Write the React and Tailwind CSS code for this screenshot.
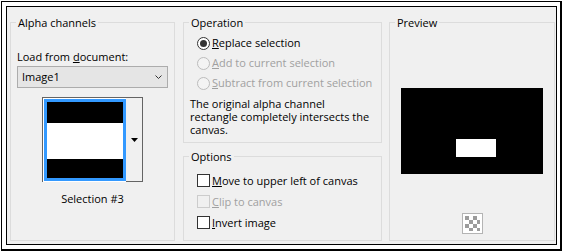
import React from 'react';

function Radio({ checked, disabled, children }) {
    return (
        <div className="flex items-center h-[20px]">
            <span className={disabled
                ? "w-[13px] h-[13px] rounded-full border border-[#bcbcbc] bg-[#f3f3f3] flex items-center justify-center"
                : "w-[13px] h-[13px] rounded-full border border-[#333333] bg-white flex items-center justify-center"}>
                {checked && <span className="w-[7px] h-[7px] rounded-full bg-[#333333]" />}
            </span>
            <span className={disabled ? "ml-[2px] text-[#a0a0a0]" : "ml-[2px] text-black"}>{children}</span>
        </div>
    );
}

function Check({ disabled, children }) {
    return (
        <div className="flex items-center h-[21px]">
            <span className={disabled
                ? "w-[13px] h-[13px] border border-[#cccccc] bg-[#f0f0f0]"
                : "w-[13px] h-[13px] border border-[#333333] bg-white"} />
            <span className={disabled ? "ml-[2px] text-[#a0a0a0]" : "ml-[2px] text-black"}>{children}</span>
        </div>
    );
}

export default function App() {
    return (
        <div className="w-[563px] h-[252px] bg-white pt-px pl-px font-['Open_Sans','Noto_Sans',sans-serif] text-[11px] leading-[16px] text-black">
            <div className="w-[561px] h-[250px] border-l border-t border-r-2 border-b-2 border-black pl-[4px] pt-[4px] pr-[3px] pb-[4px]">
                {/* dialog body */}
                <div className="w-[551px] h-[239px] border border-black bg-[#f0f0f0] flex pl-[3px] pt-[8px]">

                    {/* Alpha channels */}
                    <fieldset className="w-[165px] h-[226px] border border-[#dcdcdc] p-0 m-0">
                        <legend className="ml-[5px] px-[2px] leading-[15px]">Alpha channels</legend>
                        <div className="flex flex-col pl-[6px]">
                            <div className="mt-[19px]">Load from <u>d</u>ocument:</div>
                            <div className="mt-[1px] w-[151px] h-[22px] border border-[#acacac] bg-[#e5e5e5] flex items-center justify-between pl-[4px] pr-[5px]">
                                <span>Image1</span>
                                <svg width="7" height="4" viewBox="0 0 7 4">
                                    <polyline points="0.5,0.5 3.5,3.5 6.5,0.5" fill="none" stroke="#333" strokeWidth="1" />
                                </svg>
                            </div>
                        </div>
                        <div className="flex flex-col items-center">
                            <div className="mt-[9px] w-[101px] h-[85px] border-l border-t border-[#646464] flex">
                                <div className="w-[83px] h-full bg-white pl-px pt-px pb-px">
                                    <div className="w-[82px] h-[82px] border-[3px] border-[#3399ff] flex flex-col">
                                        <div className="h-[21px] bg-black" />
                                        <div className="h-[36px] bg-white" />
                                        <div className="flex-1 bg-black" />
                                    </div>
                                </div>
                                <div className="w-[17px] h-full bg-[#f0f0f0] border-r border-b border-[#646464] flex items-center justify-center">
                                    <svg width="7" height="4" viewBox="0 0 7 4">
                                        <polygon points="0,0 7,0 3.5,4" fill="#000" />
                                    </svg>
                                </div>
                            </div>
                            <div className="mt-[9px]">Selection #3</div>
                        </div>
                    </fieldset>

                    <div className="ml-[8px] w-[199px] flex flex-col">
                        {/* Operation */}
                        <fieldset className="w-full h-[128px] border border-[#dcdcdc] p-0 m-0">
                            <legend className="ml-[5px] px-[2px] leading-[15px]">Operation</legend>
                            <div className="mt-[3px] pl-[13px]">
                                <Radio checked><u>R</u>eplace selection</Radio>
                                <Radio disabled><u>A</u>dd to current selection</Radio>
                                <Radio disabled><u>S</u>ubtract from current selection</Radio>
                            </div>
                            <div className="mt-[4px] pl-[6px] leading-[13px]">
                                The original alpha channel<br />
                                rectangle completely intersects the<br />
                                canvas.
                            </div>
                        </fieldset>

                        {/* Options */}
                        <fieldset className="mt-[6px] w-full h-[92px] border border-[#dcdcdc] p-0 m-0">
                            <legend className="ml-[5px] px-[2px] leading-[15px]">Options</legend>
                            <div className="mt-[6px] pl-[13px]">
                                <Check><u>M</u>ove to upper left of canvas</Check>
                                <Check disabled><u>C</u>lip to canvas</Check>
                                <Check><u>I</u>nvert image</Check>
                            </div>
                        </fieldset>
                    </div>

                    {/* Preview */}
                    <fieldset className="ml-[7px] w-[166px] h-[226px] border border-[#dcdcdc] p-0 m-0">
                        <legend className="ml-[5px] px-[2px] leading-[15px]">Preview</legend>
                        <div className="flex flex-col items-center">
                            <div className="mt-[58px] w-[142px] h-[86px] bg-black pl-[55px] pt-[51px]">
                                <div className="w-[40px] h-[18px] bg-white" />
                            </div>
                            <svg className="mt-[39px]" width="21" height="21" viewBox="0 0 21 21">
                                <rect x="0.5" y="0.5" width="20" height="20" fill="#fff" stroke="#b4b4b4" />
                                <rect x="3" y="3" width="4" height="4" fill="#9c9c9c" />
                                <rect x="11" y="3" width="4" height="4" fill="#9c9c9c" />
                                <rect x="7" y="7" width="4" height="4" fill="#9c9c9c" />
                                <rect x="15" y="7" width="3" height="4" fill="#9c9c9c" />
                                <rect x="3" y="11" width="4" height="4" fill="#9c9c9c" />
                                <rect x="11" y="11" width="4" height="4" fill="#9c9c9c" />
                                <rect x="7" y="15" width="4" height="3" fill="#9c9c9c" />
                                <rect x="15" y="15" width="3" height="3" fill="#9c9c9c" />
                            </svg>
                        </div>
                    </fieldset>
                </div>
            </div>
        </div>
    );
}
